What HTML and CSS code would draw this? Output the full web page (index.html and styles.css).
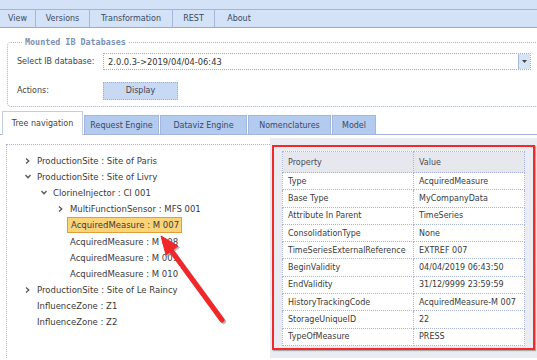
FILE: index.html
```html
<!DOCTYPE html>
<html>
<head>
<meta charset="utf-8">
<link rel="stylesheet" href="styles.css">
</head>
<body>
<div class="page">
  <div class="topband"></div>
  <nav class="menubar">
    <span class="menu-item w-view">View</span>
    <span class="menu-item w-versions">Versions</span>
    <span class="menu-item w-transf">Transformation</span>
    <span class="menu-item w-rest">REST</span>
    <span class="menu-item w-about">About</span>
  </nav>

  <fieldset class="dbbox">
    <legend class="dblegend">Mounted IB Databases</legend>
    <div class="formrow">
      <span class="label">Select IB database:</span>
      <div class="select">
        <span class="select-value">2.0.0.3-&gt;2019/04/04-06:43</span>
        <span class="select-btn"><svg width="5" height="3" viewBox="0 0 5 3"><path d="M0 0H5L2.5 3Z" fill="#444"/></svg></span>
      </div>
    </div>
    <div class="formrow actions">
      <span class="label">Actions:</span>
      <span class="button">Display</span>
    </div>
  </fieldset>

  <div class="tabs">
    <span class="tab active w-tree">Tree navigation</span>
    <span class="tab w-req">Request Engine</span>
    <span class="tab w-dv">Dataviz Engine</span>
    <span class="tab w-nom">Nomenclatures</span>
    <span class="tab w-model">Model</span>
  </div>

  <div class="main">
    <div class="tree">
      <div class="node l0"><span class="tw"><svg width="5" height="6" viewBox="0 0 5 6"><path d="M1 0.5L3.8 3L1 5.5" fill="none" stroke="#555" stroke-width="1.3"/></svg></span>ProductionSite : Site of Paris</div>
      <div class="node l0"><span class="tw"><svg width="6" height="5" viewBox="0 0 6 5"><path d="M0.5 1L3 3.8L5.5 1" fill="none" stroke="#555" stroke-width="1.3"/></svg></span>ProductionSite : Site of Livry</div>
      <div class="node l1"><span class="tw"><svg width="6" height="5" viewBox="0 0 6 5"><path d="M0.5 1L3 3.8L5.5 1" fill="none" stroke="#555" stroke-width="1.3"/></svg></span>ClorineInjector : CI 001</div>
      <div class="node l2"><span class="tw"><svg width="5" height="6" viewBox="0 0 5 6"><path d="M1 0.5L3.8 3L1 5.5" fill="none" stroke="#555" stroke-width="1.3"/></svg></span>MultiFunctionSensor : MFS 001</div>
      <div class="node l2"><span class="tw"></span><span class="selected">AcquiredMeasure : M 007</span></div>
      <div class="node l2"><span class="tw"></span>AcquiredMeasure : M 008</div>
      <div class="node l2"><span class="tw"></span>AcquiredMeasure : M 009</div>
      <div class="node l2"><span class="tw"></span>AcquiredMeasure : M 010</div>
      <div class="node l0"><span class="tw"><svg width="5" height="6" viewBox="0 0 5 6"><path d="M1 0.5L3.8 3L1 5.5" fill="none" stroke="#555" stroke-width="1.3"/></svg></span>ProductionSite : Site of Le Raincy</div>
      <div class="node l0"><span class="tw"></span>InfluenceZone : Z1</div>
      <div class="node l0"><span class="tw"></span>InfluenceZone : Z2</div>
    </div>

    <div class="props">
      <div class="redframe">
        <table class="ptable">
          <thead>
            <tr><th class="c1">Property</th><th class="c2">Value</th></tr>
          </thead>
          <tbody>
            <tr><td>Type</td><td>AcquiredMeasure</td></tr>
            <tr><td>Base Type</td><td>MyCompanyData</td></tr>
            <tr><td>Attribute In Parent</td><td>TimeSeries</td></tr>
            <tr><td>ConsolidationType</td><td>None</td></tr>
            <tr><td>TimeSeriesExternalReference</td><td>EXTREF 007</td></tr>
            <tr><td>BeginValidity</td><td>04/04/2019 06:43:50</td></tr>
            <tr><td>EndValidity</td><td>31/12/9999 23:59:59</td></tr>
            <tr><td>HistoryTrackingCode</td><td>AcquiredMeasure-M 007</td></tr>
            <tr><td>StorageUniqueID</td><td>22</td></tr>
            <tr><td>TypeOfMeasure</td><td>PRESS</td></tr>
          </tbody>
        </table>
      </div>
    </div>
  </div>

  <svg class="arrow" width="537" height="360" viewBox="0 0 537 360">
    <g transform="translate(1.5,1.5)" fill="#9a9a9a" stroke="#9a9a9a" opacity="0.7">
      <line x1="222" y1="320" x2="170" y2="249" stroke-width="5" stroke-linecap="round"/>
      <path d="M161 236L178 246L166 255Z" stroke-width="1"/>
    </g>
    <g fill="#f0282a" stroke="#f0282a">
      <line x1="222" y1="320" x2="170" y2="249" stroke-width="5" stroke-linecap="round"/>
      <path d="M161 236L178 246L166 255Z" stroke-width="1"/>
    </g>
  </svg>
</div>
</body>
</html>
```

FILE: styles.css
```css
html, body {
  margin: 0;
  padding: 0;
  background: #fff;
  overflow: hidden;
}
.page {
  position: relative;
  width: 537px;
  height: 360px;
  overflow: hidden;
  font-family: "DejaVu Sans", Verdana, sans-serif;
  font-size: 8px;
  color: #3a3a3a;
}
.topband {
  height: 9px;
  background: #d3e2f6;
  border-bottom: 1px solid #9fb6da;
}
.menubar {
  display: flex;
  height: 17px;
  background: #d3e2f6;
  border-bottom: 1px solid #93aad3;
}
.menu-item {
  display: flex;
  align-items: center;
  justify-content: center;
  border-right: 1px solid #a7b7dc;
  color: #3d4a60;
}
.w-view { width: 35px; }
.w-versions { width: 53px; }
.w-transf { width: 82px; }
.w-rest { width: 41px; }
.w-about { width: 48px; border-right: none; }

.dbbox {
  margin: 9px -30px 0 7px;
  padding: 6px 0 7px 9px;
  border: 1px dotted #a3b2d3;
  border-radius: 4px;
}
.dblegend {
  padding: 0 2px;
  margin-left: 6px;
  font-family: "DejaVu Sans Mono", monospace;
  font-weight: bold;
  font-size: 8.4px;
  line-height: 10px;
  color: #7c8fb4;
}
.formrow {
  display: flex;
  align-items: center;
  height: 17px;
}
.formrow.actions {
  margin-top: 12px;
}
.label {
  width: 86px;
  color: #444;
}
.select {
  display: flex;
  width: 426px;
  height: 15px;
  border: 1px dotted #9eaad0;
  align-items: center;
  justify-content: space-between;
}
.select-value {
  padding-left: 4px;
  font-size: 8.3px;
  color: #333;
}
.select-btn {
  display: flex;
  align-items: center;
  justify-content: center;
  width: 11px;
  height: 15px;
  background: #d6e4f7;
  border-left: 1px solid #a9b8dc;
}
.button {
  display: flex;
  align-items: center;
  justify-content: center;
  width: 73px;
  height: 16px;
  background: #c7d9f3;
  border: 1px dotted #9fb0d8;
  color: #445;
}

.tabs {
  display: flex;
  align-items: flex-end;
  margin-top: 3px;
  height: 24px;
  padding-left: 2px;
  border-bottom: 1px solid #a5b4d8;
}
.tab {
  display: flex;
  align-items: center;
  justify-content: center;
  height: 18px;
  background: #b3cbee;
  border: 1px solid #a3b6de;
  border-bottom: none;
  margin-right: 1px;
  color: #3a4868;
}
.tab.active {
  height: 23px;
  background: #fff;
  border-color: #c5cde4;
  margin-bottom: -1px;
  color: #444;
}
.w-tree { width: 79px; }
.w-req { width: 73px; }
.w-dv { width: 85px; }
.w-nom { width: 81px; }
.w-model { width: 42px; }

.main {
  display: flex;
  margin-top: 3px;
  height: 220px;
}
.tree {
  width: 263px;
  margin: 6px 0 0 6px;
  padding-top: 7.5px;
  border-top: 1px dotted #aab3e0;
  border-left: 1px dotted #aab3e0;
  font-size: 8.5px;
}
.node {
  display: flex;
  align-items: center;
  height: 16.2px;
  color: #3a3a3a;
  white-space: nowrap;
}
.tw {
  display: inline-flex;
  align-items: center;
  justify-content: flex-start;
  width: 12px;
  flex: none;
}
.l0 { padding-left: 18px; }
.l1 { padding-left: 34px; }
.l2 { padding-left: 51px; }
.selected {
  margin-left: -3px;
  padding: 2px 2px 2px 3px;
  background: #fbd47a;
  border: 1px solid #e29e3a;
}

.props {
  flex: 1;
  background: #ebecf1;
  padding: 7px 2px 3px 2px;
  height: 210px;
}
.redframe {
  height: 197px;
  border: 2px solid #ef2a2a;
  box-shadow: 1px 1px 1px #aaa;
  padding: 4px 0 0 8px;
}
.ptable {
  border-collapse: collapse;
  background: #fff;
  font-size: 8px;
}
.ptable th, .ptable td {
  border: 1px dotted #a9b5d8;
  text-align: left;
  font-weight: normal;
  padding: 0 0 0 5px;
  height: 16.3px;
  color: #3a3a3a;
  white-space: nowrap;
}
.ptable th {
  height: 20px;
  background: #e6e8ee;
  color: #4a4a55;
}
.c1 { width: 125px; }
.c2 { width: 105px; }

.arrow {
  position: absolute;
  left: 0;
  top: 0;
  pointer-events: none;
}
```
